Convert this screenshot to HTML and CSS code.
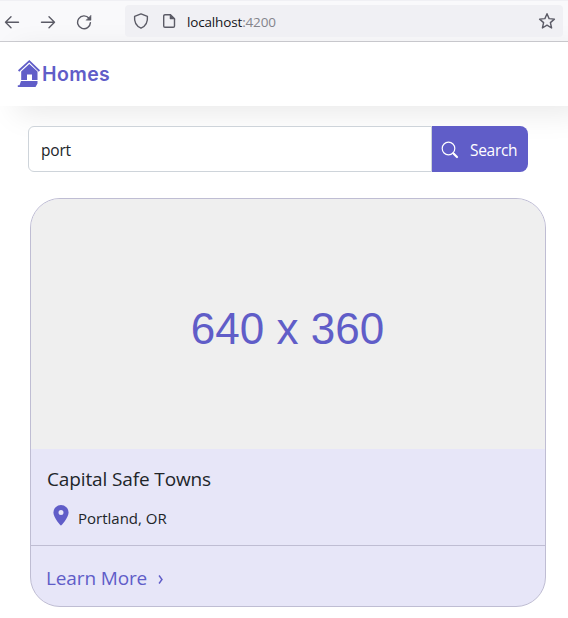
FILE: index.html
```html
<!DOCTYPE html>
<html lang="en">
<head>
<meta charset="utf-8">
<title>Homes</title>
<link rel="stylesheet" href="styles.css">
</head>
<body>
<div class="toolbar">
  <div class="nav">
    <svg width="16" height="16" viewBox="0 0 16 16"><path d="M14.500 8.200H1.500M7 2.700 1.500 8.200 7 13.700"/></svg>
    <svg width="16" height="16" viewBox="0 0 16 16"><path d="M1.500 8.200h13M9 2.700l5.500 5.500L9 13.700"/></svg>
    <svg width="16" height="16" viewBox="0 0 16 16"><path d="M13 4.300A6.400 6.400 0 1 0 14.400 8.600"/><path class="solid" d="M15 1.500v4.700h-4.700z"/></svg>
  </div>
  <div class="address">
    <svg class="shield" width="16" height="16" viewBox="0 0 16 16"><path d="M8 .9 14.400 3.400C14.900 8.500 12.600 13.200 8 15.200 3.400 13.200 1.100 8.500 1.600 3.400z"/></svg>
    <svg class="page" width="14" height="16" viewBox="0 0 14 16"><path d="M3 1.700h5.500l4 4V13a1.300 1.300 0 0 1-1.300 1.300H3A1.300 1.300 0 0 1 1.700 13V3A1.300 1.300 0 0 1 3 1.700z"/><path class="solid" d="M8 1.500V6h4.700z"/></svg>
    <span class="url">localhost<span class="port">:4200</span></span>
    <svg class="star" width="18" height="18" viewBox="0 0 18 18"><path d="m9 1.700 2.100 4.900 5.300.500-4 3.500 1.200 5.400L9 13.200 4.400 16l1.200-5.400-4-3.500 5.300-.500z"/></svg>
  </div>
</div>
<header class="brand">
  <svg class="house" width="24" height="29" viewBox="0 0 24 29"><path class="roof" d="M1.600 12 12.300 2.200 22.400 12"/><path d="M12.300 5 20.500 12.500V20.900H15v-5.400H10v5.400H4.200v-8.400zM4 22h16.500v2.500L18.500 28H.8v-1.700h1.700z"/></svg>
  <span class="name">Homes</span>
</header>
<main>
  <form class="search">
    <input type="text" value="port" aria-label="Search">
    <button type="button">
      <svg width="18" height="18" viewBox="0 0 18 18"><circle cx="7.500" cy="7.500" r="6.300"/><path d="m12 12 1.500 1.500"/><path class="handle" d="m13 13 3 3"/></svg>
      <span>Search</span>
    </button>
  </form>
  <article class="card">
    <div class="photo"><span>640 x 360</span></div>
    <div class="details">
      <h2>Capital Safe Towns</h2>
      <p><svg width="16" height="21" viewBox="0 0 16 21"><path fill-rule="evenodd" d="M8 0a7.600 7.600 0 0 1 7.600 7.600C15.600 13 8 20.800 8 20.800S.4 13 .4 7.600A7.600 7.600 0 0 1 8 0zm0 5a2.500 2.500 0 1 0 0 5 2.500 2.500 0 0 0 0-5z"/></svg><span>Portland, OR</span></p>
    </div>
    <div class="more"><a>Learn More</a><svg width="6" height="9" viewBox="0 0 6 9"><path d="M1 .5c1 1.300 2 2.700 3 4-1 1.300-2 2.700-3 4"/></svg></div>
  </article>
</main>
</body>
</html>
```
FILE: styles.css
```css
* { box-sizing: border-box; }
body {
  margin: 0;
  height: 618px;
  overflow: hidden;
  background: #fff;
  color: #212529;
  font-family: "Open Sans", "Noto Sans", sans-serif;
}
svg { display: block; flex: none; }
.toolbar {
  display: flex;
  height: 42px;
  padding: 4px;
  background: #f9f9fb;
  border-top: 1px solid #f0f0f4;
  border-bottom: 1px solid #ccccd1;
}
.nav { display: flex; gap: 20px; width: 121px; padding-top: 9px; }
.toolbar svg { fill: none; stroke: #5b5b66; stroke-width: 1.4; stroke-linejoin: round; stroke-linecap: round; }
.toolbar .solid { fill: #5b5b66; stroke-width: .5; }
.address {
  display: flex;
  align-items: center;
  flex: 1;
  height: 32px;
  margin-right: 1px;
  padding: 0 7px 0 8px;
  background: #f0f0f4;
  border-radius: 4px;
}
.page { margin-left: 13px; }
.url { margin-left: 11px; padding-top: 2px; font-size: 13.5px; letter-spacing: -.16px; color: #15141a; }
.port { color: #84848b; }
.star { margin-left: auto; }
.brand {
  display: flex;
  height: 64px;
  padding: 17px 0 0 17px;
  background: #fff;
  color: #605dc8;
  box-shadow: 16px 8px 30px rgba(0, 0, 0, .085);
}
.house { fill: #605dc8; }
.roof { fill: none; stroke: #605dc8; stroke-width: 1.8; }
.name { margin: 1px 0 0 1px; font: 600 19.500px/28px Inter, sans-serif; letter-spacing: .4px; }
.search { display: flex; width: 500px; height: 46px; margin: 20px 0 0 28px; position: relative; }
.search input {
  width: 404px;
  padding: 2px 12px 1px;
  border: 1px solid #ced4da;
  border-radius: 6px 0 0 6px;
  background: #fff;
  color: #212529;
  font: 15.500px "Open Sans", sans-serif;
  letter-spacing: -.2px;
  outline: 0;
}
.search button {
  display: flex;
  align-items: center;
  width: 96px;
  padding: 2px 0 0 9px;
  border: 0;
  border-radius: 0 8px 8px 0;
  background: #605dc8;
  color: #fff;
  font: 15.500px "Open Sans", sans-serif;
  letter-spacing: -.3px;
}
.search button svg { fill: none; stroke: #fff; stroke-width: 1.2; stroke-linecap: round; }
.search .handle { stroke-width: 2.2; }
.search button span { margin-left: 11px; white-space: nowrap; }
.card {
  width: 516px;
  height: 409px;
  margin: 26px 0 0 30px;
  overflow: hidden;
  border: 1px solid #bfbdd3;
  border-radius: 30px;
  background: #e7e6f8;
}
.photo {
  display: flex;
  align-items: center;
  justify-content: center;
  height: 250px;
  padding: 10px 1px 0 0;
  background: #efefef;
  color: #605dc8;
  font: 44px "Liberation Sans", sans-serif;
}
.details { height: 97px; padding: 16px 16px 0; border-bottom: 1px solid #bfbdd3; }
h2 { margin: 0; font-size: 19px; line-height: 28px; font-weight: 400; letter-spacing: -.13px; white-space: nowrap; }
.details p { display: flex; margin: 12px 0 0 6px; font-size: 15px; line-height: 26px; }
.details p svg { fill: #605dc8; }
.details p span { margin-left: 9px; }
.more { display: flex; align-items: center; padding: 17px 15px; color: #605dc8; font-size: 19px; line-height: 30px; letter-spacing: -.13px; }
.more svg { margin: 3px 0 0 11px; fill: none; stroke: #605dc8; stroke-width: 1.400; }
```
